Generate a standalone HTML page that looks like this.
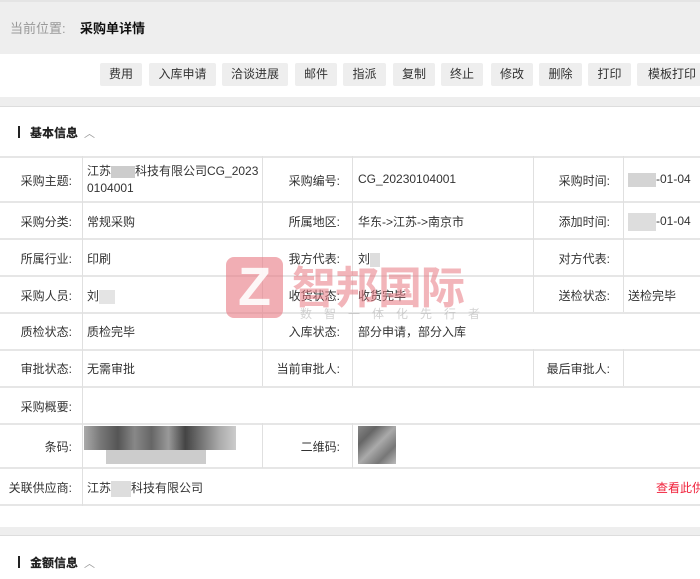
<!DOCTYPE html>
<html><head><meta charset="utf-8"><style>
*{margin:0;padding:0;box-sizing:border-box}
body{width:700px;height:579px;overflow:hidden;background:#fff;font-family:"Liberation Sans","Noto Sans CJK SC",sans-serif;font-size:12px;color:#333;position:relative}
.hdr{position:absolute;left:0;top:0;width:700px;height:54px;background:#eeeeee;border-top:2px solid #e4e4e4}
.hdr span{position:absolute;top:16px;font-size:13px}
.btn{position:absolute;top:63px;height:23px;background:#eeeeee;border-radius:2px;line-height:23px;text-align:center;font-size:12px;color:#333}
.band{position:absolute;left:0;width:700px;background:#eeeeee;border-bottom:1px solid #ddd}
.title{position:absolute;left:18px;font-weight:bold;font-size:12px;color:#222}
.title:before{content:"";position:absolute;left:-0px;top:2px;width:2px;height:12px;background:#222}
.title b{margin-left:12px}
.title i{font-style:normal;font-weight:normal;color:#999;margin-left:6px;font-size:11px}
.hl{position:absolute;left:0;width:700px;height:2px;background:#e6e6e6}
.vl{position:absolute;width:1px;background:#e0e0e0}
.t{position:absolute;white-space:nowrap}
.r{text-align:right}
.blur{position:absolute;background:#d8d8d8}
</style></head><body>
<div class="hdr"><span style="left:10px;color:#999">当前位置:</span><span style="left:80px;color:#111;font-weight:600">采购单详情</span></div>
<div class="btn" style="left:100px;width:42px">费用</div>
<div class="btn" style="left:149px;width:67px">入库申请</div>
<div class="btn" style="left:222px;width:66px">洽谈进展</div>
<div class="btn" style="left:295px;width:42px">邮件</div>
<div class="btn" style="left:343px;width:43px">指派</div>
<div class="btn" style="left:393px;width:42px">复制</div>
<div class="btn" style="left:441px;width:42px">终止</div>
<div class="btn" style="left:491px;width:42px">修改</div>
<div class="btn" style="left:539px;width:43px">删除</div>
<div class="btn" style="left:588px;width:43px">打印</div>
<div class="btn" style="left:637px;width:70px">模板打印</div>
<div class="band" style="top:97px;height:10px"></div>
<div class="title" style="top:124px"><b>基本信息</b><i>︿</i></div>
<div class="hl" style="top:156px"></div>
<div class="hl" style="top:201px"></div>
<div class="hl" style="top:238px"></div>
<div class="hl" style="top:275px"></div>
<div class="hl" style="top:312px"></div>
<div class="hl" style="top:349px"></div>
<div class="hl" style="top:386px"></div>
<div class="hl" style="top:423px"></div>
<div class="hl" style="top:467px"></div>
<div class="hl" style="top:504px"></div>
<div class="vl" style="left:82px;top:156px;height:350px"></div>
<div class="vl" style="left:262px;top:156px;height:230px"></div>
<div class="vl" style="left:352px;top:156px;height:230px"></div>
<div class="vl" style="left:533px;top:156px;height:156px"></div>
<div class="vl" style="left:623px;top:156px;height:156px"></div>
<div class="vl" style="left:533px;top:349px;height:37px"></div>
<div class="vl" style="left:623px;top:349px;height:37px"></div>
<div class="vl" style="left:262px;top:423px;height:45px"></div>
<div class="vl" style="left:352px;top:423px;height:45px"></div>
<div class="t r" style="right:628px;top:172px">采购主题:</div>
<div class="t r" style="right:628px;top:213px">采购分类:</div>
<div class="t r" style="right:628px;top:250px">所属行业:</div>
<div class="t r" style="right:628px;top:287px">采购人员:</div>
<div class="t r" style="right:628px;top:323px">质检状态:</div>
<div class="t r" style="right:628px;top:360px">审批状态:</div>
<div class="t r" style="right:628px;top:398px">采购概要:</div>
<div class="t r" style="right:628px;top:438px">条码:</div>
<div class="t r" style="right:628px;top:479px">关联供应商:</div>
<div class="t" style="left:87px;top:163px;line-height:17px">江苏<span style="display:inline-block;width:24px;height:12px;background:#ccc;vertical-align:middle"></span>科技有限公司CG_2023<br>0104001</div>
<div class="t" style="left:87px;top:213px">常规采购</div>
<div class="t" style="left:87px;top:250px">印刷</div>
<div class="t" style="left:87px;top:287px">刘<span style="display:inline-block;width:16px;height:14px;background:#e4e4e4;vertical-align:middle"></span></div>
<div class="t" style="left:87px;top:323px">质检完毕</div>
<div class="t" style="left:87px;top:360px">无需审批</div>
<div class="t" style="left:87px;top:479px">江苏<span style="display:inline-block;width:20px;height:16px;background:#ddd;vertical-align:middle"></span>科技有限公司</div>
<div class="t" style="left:656px;top:479px;color:#f0203a">查看此供</div>
<div class="t r" style="right:360px;top:172px">采购编号:</div>
<div class="t r" style="right:360px;top:213px">所属地区:</div>
<div class="t r" style="right:360px;top:250px">我方代表:</div>
<div class="t r" style="right:360px;top:287px">收货状态:</div>
<div class="t r" style="right:360px;top:323px">入库状态:</div>
<div class="t r" style="right:360px;top:360px">当前审批人:</div>
<div class="t r" style="right:360px;top:438px">二维码:</div>
<div class="t" style="left:358px;top:172px">CG_20230104001</div>
<div class="t" style="left:358px;top:213px">华东-&gt;江苏-&gt;南京市</div>
<div class="t" style="left:358px;top:250px">刘<span style="display:inline-block;width:10px;height:14px;background:#ddd;vertical-align:middle"></span></div>
<div class="t" style="left:358px;top:287px">收货完毕</div>
<div class="t" style="left:358px;top:323px">部分申请，部分入库</div>
<div class="t r" style="right:90px;top:172px">采购时间:</div>
<div class="t r" style="right:90px;top:213px">添加时间:</div>
<div class="t r" style="right:90px;top:250px">对方代表:</div>
<div class="t r" style="right:90px;top:287px">送检状态:</div>
<div class="t r" style="right:90px;top:360px">最后审批人:</div>
<div class="t" style="left:628px;top:172px"><span style="display:inline-block;width:28px;height:14px;background:#d4d4d4;vertical-align:middle"></span>-01-04</div>
<div class="t" style="left:628px;top:213px"><span style="display:inline-block;width:28px;height:18px;background:#ddd;vertical-align:middle"></span>-01-04</div>
<div class="t" style="left:628px;top:287px">送检完毕</div>
<div class="blur" style="left:84px;top:426px;width:152px;height:24px;background:linear-gradient(90deg,#aaa,#777,#555,#888,#666,#999,#444,#777,#aaa,#ccc)"></div>
<div class="blur" style="left:106px;top:450px;width:100px;height:14px;background:#ccc"></div>
<div class="blur" style="left:358px;top:426px;width:38px;height:38px;background:linear-gradient(135deg,#888,#666,#aaa,#777,#bbb)"></div>
<div class="band" style="top:527px;height:9px"></div>
<div class="title" style="top:554px"><b>金额信息</b><i>︿</i></div>
<div style="position:absolute;left:226px;top:257px;width:57px;height:61px;background:rgba(232,120,130,.6);border-radius:8px"></div>
<div style="position:absolute;left:226px;top:257px;width:57px;height:61px;color:#fff;font:bold 54px 'Liberation Sans',sans-serif;text-align:center;line-height:61px;opacity:.9">Z</div>
<div class="t" style="left:292px;top:252px;font-size:44px;font-weight:bold;color:rgba(232,120,130,.55);letter-spacing:-1px">智邦国际</div>
<div class="t" style="left:300px;top:305px;font-size:12px;color:rgba(180,180,180,.6);letter-spacing:12px">数智一体化先行者</div>
</body></html>
